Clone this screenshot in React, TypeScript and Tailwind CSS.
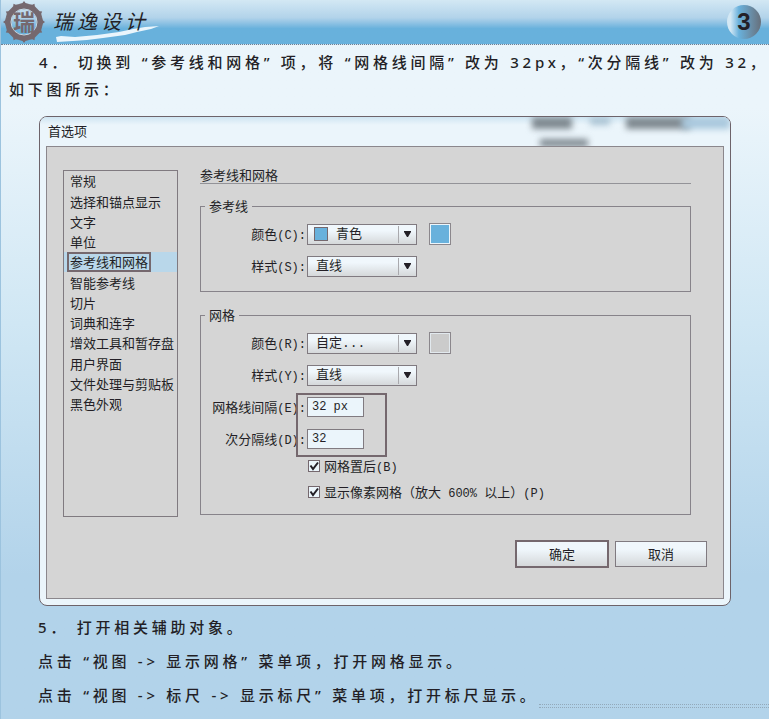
import { useState } from 'react';
import type { ReactNode } from 'react';
import clsx from 'clsx';

const CATEGORIES = [
  '常规',
  '选择和锚点显示',
  '文字',
  '单位',
  '参考线和网格',
  '智能参考线',
  '切片',
  '词典和连字',
  '增效工具和暂存盘',
  '用户界面',
  '文件处理与剪贴板',
  '黑色外观',
];

const PETALS = Array.from({ length: 12 }, (_, i) => i * 30);

export default function App() {
  return (
    <div className="flex min-h-screen flex-col border-l border-[#9cc3de] bg-linear-to-b from-[#ebf5fb] from-15% via-[#d0e7f4] via-45% to-[#b2d3ea] to-80% font-['Noto_Sans','Noto_Sans_CJK_SC',sans-serif] text-[#231f26]">
      <Header />

      <main className="flex-1">
        <p className="mt-1 pl-2 indent-[30px] text-[15px] leading-[27px] font-medium tracking-[0.25em]">
          {'4\uff0e 切换到 “参考线和网格” 项\uff0c将 “网格线间隔” 改为 32px\uff0c“次分隔线” 改为 32\uff0c如下图所示\uff1a'}
        </p>

        <PreferencesDialog />

        <div className="mt-1 pl-[37px] text-[15px] leading-[34px] font-medium tracking-[0.25em]">
          <p>{'5\uff0e 打开相关辅助对象。'}</p>
          <p>{'点击 “视图 -> 显示网格” 菜单项\uff0c打开网格显示。'}</p>
          <div className="flex items-end justify-between">
            <p>{'点击 “视图 -> 标尺 -> 显示标尺” 菜单项\uff0c打开标尺显示。'}</p>
            <span className="mb-1 h-1 w-[230px] min-w-0 shrink border-y border-dotted border-[#93a9ba]" />
          </div>
        </div>
      </main>
    </div>
  );
}

function Header() {
  return (
    <header className="flex h-[45px] items-center justify-between border-b border-dotted border-[#6f7f92] bg-linear-to-b from-[#d3e8f4] via-[#b2d3ea] via-40% to-[#68b1dc] to-65% pr-2">
      <div className="flex items-center">
        <Logo />
        <div className="relative ml-2">
          <svg className="absolute top-4 left-0" width="108" height="16" viewBox="0 0 108 16" aria-hidden="true">
            <path
              d="M3 11 L8 10 L22 11 L44 9 L66 6 L80 3 L92 1 L106 0 L98 3 L84 6 L72 9 L50 12 L34 14 L20 15 L4 16 Z"
              fill="#eaf5fc"
            />
          </svg>
          <span className="relative text-xl leading-6 tracking-[0.2em] italic">瑞逸设计</span>
        </div>
      </div>
      <span className="flex size-[34px] items-center justify-center rounded-full bg-linear-to-r from-[#d3e8f4] from-10% via-[#68b1dc] via-35% to-[#66707c] font-['Liberation_Sans',sans-serif] text-2xl font-bold">
        3
      </span>
    </header>
  );
}

function Logo() {
  return (
    <svg className="ml-0.5" width="42" height="42" viewBox="0 0 42 42" aria-label="瑞">
      <circle cx="21" cy="21" r="15" fill="none" stroke="#75686e" strokeWidth="2" />
      <g fill="#75686e">
        {PETALS.map((angle) => (
          <path
            key={angle}
            transform={`rotate(${angle} 21 21)`}
            d="M21 0 L22.5 2 L26 3 L25 8.5 L17 8.5 L16 3 L19.5 2 Z"
          />
        ))}
      </g>
      <circle cx="21" cy="21" r="13" fill="none" stroke="#c4d9e6" strokeWidth="1" />
      <text
        x="21"
        y="29"
        textAnchor="middle"
        fontSize="22"
        fontWeight="bold"
        fill="#75686e"
      >
        瑞
      </text>
    </svg>
  );
}

function PreferencesDialog() {
  const [active, setActive] = useState('参考线和网格');

  return (
    <section className="relative mt-[13px] mr-[38px] ml-[38px] overflow-hidden rounded-lg border border-[#6d636a] bg-[#ebf5fb] px-1.5 pb-1.5 font-['Noto_Sans_CJK_SC',sans-serif] text-[13px]">
      {/* Blurred window behind the glass title bar */}
      <div className="absolute inset-x-0 top-0 h-2 bg-linear-to-b from-[#cfe5f2] to-[#ebf5fb]" />
      <div className="absolute top-0 right-[158px] h-3 w-10 bg-[#7f8990] blur-[3px]" />
      <div className="absolute top-0 right-[120px] h-2 w-5 bg-[#a9c2d2] blur-[3px]" />
      <div className="absolute top-0 right-10 h-3 w-16 bg-[#7f8990] blur-[3px]" />
      <div className="absolute top-0 right-0 h-3 w-12 bg-[#a9c8dd] blur-[3px]" />
      <div className="absolute top-[22px] right-[142px] h-2 w-12 bg-[#7f8990] blur-[3px]" />

      <h2 className="relative h-[29px] px-0.5 text-[13px] leading-7">首选项</h2>

      <div className="relative border border-[#8b878c] bg-[#d5d5d5] px-4 pt-[23px] pb-[30px]">
        <div className="flex gap-[22px]">
          <div className="min-h-[347px] w-[115px] shrink-0 border border-[#807a80]">
            <ul className="grid h-[243px] auto-rows-fr">
              {CATEGORIES.map((name) => (
                <li key={name}>
                  <button
                    type="button"
                    onClick={() => setActive(name)}
                    className={clsx(
                      'flex h-full w-full items-center text-left whitespace-nowrap',
                      name === active ? 'bg-[#b9d7ea] pl-[3px]' : 'pl-[6px]'
                    )}
                  >
                    {name === active ? (
                      <span className="flex h-full items-center border-2 border-[#75686e] px-px">{name}</span>
                    ) : (
                      name
                    )}
                  </button>
                </li>
              ))}
            </ul>
          </div>

          <form className="min-w-0 flex-1 pr-4">
            <h3 className="-mt-1 h-[18px] border-b border-[#939398] text-[13px] leading-[17px]">
              参考线和网格
            </h3>

            <Group title="参考线" className="mt-[13px]">
              <Field id="guide-color" label="颜色" hotkey="C">
                <Select id="guide-color" options={['青色', '洋红色', '黄色']} swatch />
                <span className="ml-3 size-[22px] border border-[#8b878c] bg-[#68b1dc] ring-1 ring-[#ebf5fb] ring-inset" />
              </Field>
              <Field id="guide-style" label="样式" hotkey="S">
                <Select id="guide-style" options={['直线', '点线']} />
              </Field>
            </Group>

            <Group title="网格" className="mt-[14px]">
              <Field id="grid-color" label="颜色" hotkey="R">
                <Select id="grid-color" options={['自定...', '淡灰色']} />
                <span className="ml-3 size-[22px] border border-[#8b878c] bg-[#cbcbcb] ring-1 ring-[#e2e9ee] ring-inset" />
              </Field>
              <Field id="grid-style" label="样式" hotkey="Y">
                <Select id="grid-style" options={['直线', '点线']} />
              </Field>
              <div className="relative">
                <Field id="grid-gap" label="网格线间隔" hotkey="E">
                  <TextBox id="grid-gap" value="32 px" />
                </Field>
                <Field id="grid-sub" label="次分隔线" hotkey="D">
                  <TextBox id="grid-sub" value="32" />
                </Field>
                {/* Marker around both values */}
                <div className="pointer-events-none absolute top-0.5 left-[95px] h-16 w-[91px] border-2 border-[#75686e]" />
              </div>
              <div className="-mt-0.5">
                <Check id="grid-back">
                  网格置后<Latin>(B)</Latin>
                </Check>
                <Check id="pixel-grid">
                  {'显示像素网格\uff08放大'}
                  <Latin> 600% </Latin>
                  {'以上\uff09'}
                  <Latin>(P)</Latin>
                </Check>
              </div>
            </Group>
          </form>
        </div>

        <div className="mt-[23px] flex items-center justify-end gap-1.5">
          <button
            type="button"
            className="h-7 w-[94px] border-2 border-[#75686e] bg-linear-to-b from-[#f0f7fc] from-30% to-[#d5d8da]"
          >
            确定
          </button>
          <button
            type="button"
            className="h-[26px] w-[92px] border border-[#807a80] bg-linear-to-b from-[#f0f7fc] from-30% to-[#d5d8da]"
          >
            取消
          </button>
        </div>
      </div>
    </section>
  );
}

function Latin({ children }: { children: ReactNode }) {
  return <span className="font-['Liberation_Mono',monospace] text-xs whitespace-pre">{children}</span>;
}

function Group({ title, className, children }: { title: string; className?: string; children: ReactNode }) {
  return (
    <fieldset className={clsx('border border-[#87838a] pt-[3px] pb-[9px]', className)}>
      <legend className="ml-1 px-1 leading-[18px]">{title}</legend>
      {children}
    </fieldset>
  );
}

interface FieldProps {
  id: string;
  label: string;
  hotkey: string;
  children: ReactNode;
}

function Field({ id, label, hotkey, children }: FieldProps) {
  return (
    <div className="flex h-8 items-center">
      <label htmlFor={id} className="w-[105px] shrink-0 text-right whitespace-nowrap">
        {label}
        <Latin>({hotkey}):</Latin>
      </label>
      <div className="ml-px flex items-center">{children}</div>
    </div>
  );
}

function Select({ id, options, swatch }: { id: string; options: string[]; swatch?: boolean }) {
  return (
    <div className="relative">
      <select
        id={id}
        className={clsx(
          "block h-[21px] w-[110px] appearance-none border border-[#807a80] bg-linear-to-b from-[#f0f7fc] from-30% to-[#d5d8da] font-['Liberation_Mono','Noto_Sans_CJK_SC',monospace] leading-[19px]",
          swatch ? 'pl-7' : 'pl-2'
        )}
      >
        {options.map((o) => (
          <option key={o}>{o}</option>
        ))}
      </select>
      {swatch && <span className="absolute top-[3px] left-[7px] size-[14px] border border-[#75686e] bg-[#68b1dc]" />}
      <span className="pointer-events-none absolute inset-y-0.5 right-0.5 flex w-[17px] items-center justify-center border-l border-[#a9a9ad]">
        <svg width="7" height="6" viewBox="0 0 7 6" aria-hidden="true">
          <path d="M0 0 H7 V1 L4 6 H3 L0 1 Z" fill="#231f26" />
        </svg>
      </span>
    </div>
  );
}

function TextBox({ id, value }: { id: string; value: string }) {
  return (
    <input
      id={id}
      type="text"
      defaultValue={value}
      className="h-5 w-[57px] border border-[#807a80] bg-[#ebf5fb] px-1 font-['Liberation_Mono',monospace] text-xs"
    />
  );
}

function Check({ id, children }: { id: string; children: ReactNode }) {
  return (
    <div className="flex h-[26px] items-center pl-[107px]">
      <span className="relative mr-1 size-3">
        <input
          id={id}
          type="checkbox"
          defaultChecked
          className="peer block size-3 appearance-none border border-[#75686e] bg-[#ebf5fb]"
        />
        <svg
          className="pointer-events-none absolute inset-0 hidden peer-checked:block"
          width="12"
          height="12"
          viewBox="0 0 12 12"
          aria-hidden="true"
        >
          <path d="M2.5 5.5 L5 9 L10 2.5" fill="none" stroke="#231f26" strokeWidth="2" />
        </svg>
      </span>
      <label htmlFor={id} className="whitespace-nowrap">
        {children}
      </label>
    </div>
  );
}
